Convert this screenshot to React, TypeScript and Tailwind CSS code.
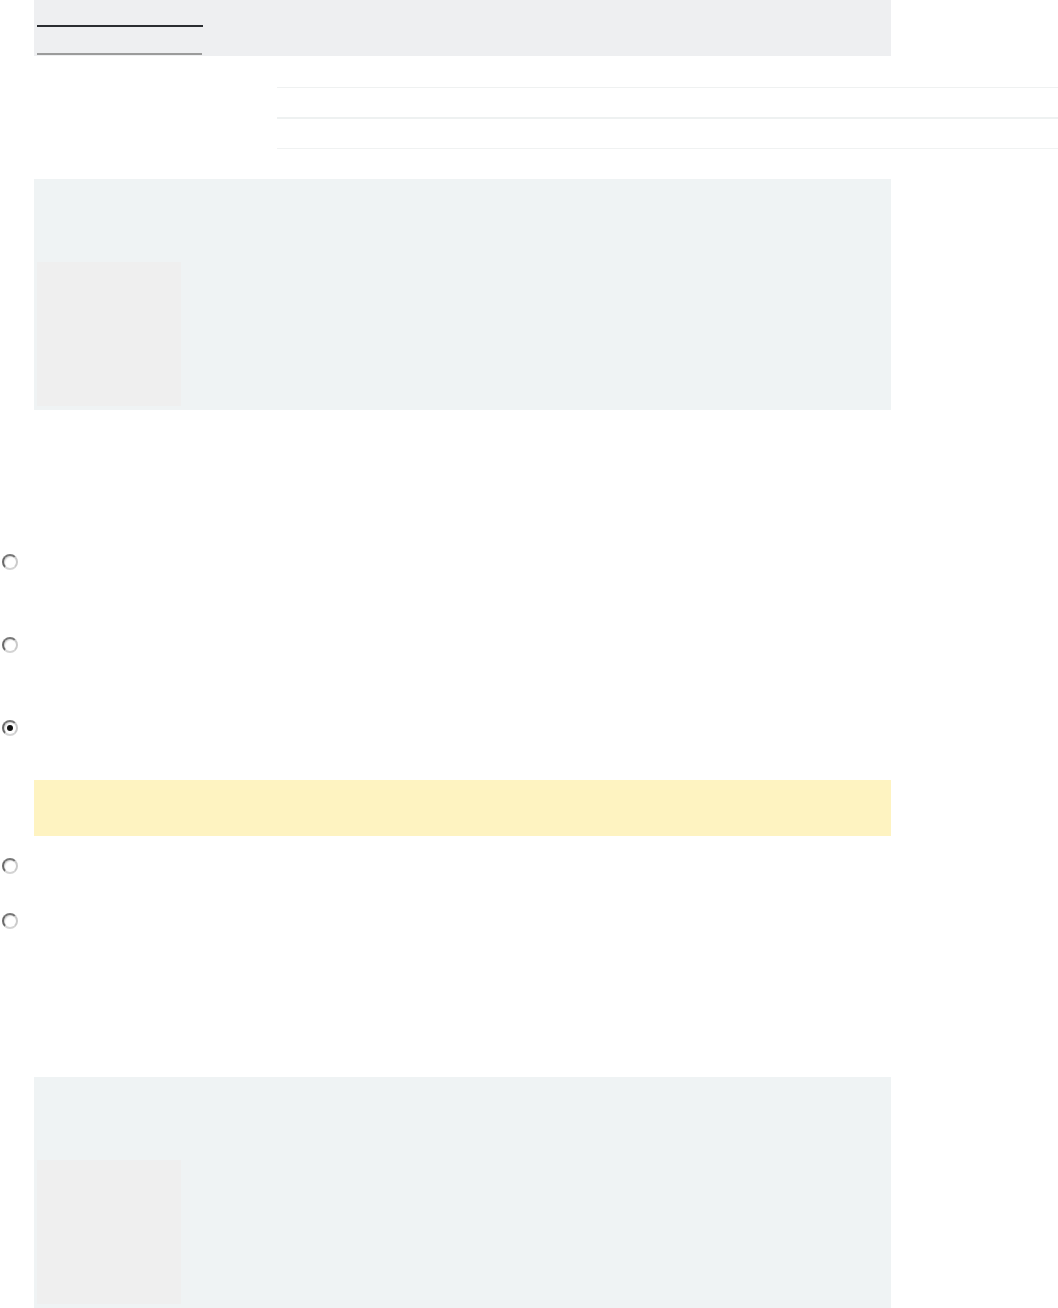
import React from 'react';

function Radio({ checked = false }: { checked?: boolean }) {
  return (
    <span className="flex h-[16px] w-[16px] items-center justify-center rounded-full border-2 border-t-[#777] border-l-[#6a6a6a] border-r-[#cacaca] border-b-[#d4d4d4] bg-white shadow-[inset_1px_1px_1px_rgba(0,0,0,0.15)]">
      {checked && <span className="h-[6px] w-[6px] rounded-full bg-[#111]" />}
    </span>
  );
}

function MediaBox() {
  return (
    <div className="ml-[34px] flex h-[231px] w-[857px] flex-col justify-end bg-[#eff3f4] pb-[4px] pl-[3px]">
      <div className="h-[144px] w-[144px] bg-[#efefef]" />
    </div>
  );
}

export default function App() {
  return (
    <div className="min-h-[1308px] w-[1058px] overflow-hidden bg-white" style={{ fontFamily: '"Liberation Sans", Arial, sans-serif' }}>
      {/* header tabs */}
      <div className="ml-[34px] h-[56px] w-[857px] bg-[#eeeff1] pl-[3px] pt-[25px]">
        <div className="h-[2px] w-[166px] bg-[#2a2d31]" />
        <div className="mt-[26px] h-[2px] w-[165px] bg-[#9b9b9b]" />
      </div>

      {/* divider rows */}
      <div className="ml-[277px] pt-[31px]">
        <div className="h-px bg-[#eff1f1]" />
        <div className="mt-[29px] h-[2px] bg-[#eef1f1]" />
        <div className="mt-[29px] h-px bg-[#f0f2f2]" />
      </div>

      <div className="mt-[30px]">
        <MediaBox />
      </div>

      {/* options */}
      <div className="ml-[2px] mt-[144px] flex flex-col">
        <Radio />
        <div className="mt-[67px]">
          <Radio />
        </div>
        <div className="mt-[67px]">
          <Radio checked />
        </div>
      </div>

      <div className="ml-[34px] mt-[44px] h-[56px] w-[857px] bg-[#fef3c1]" />

      <div className="ml-[2px] mt-[22px] flex flex-col">
        <Radio />
        <div className="mt-[39px]">
          <Radio />
        </div>
      </div>

      <div className="mt-[148px]">
        <MediaBox />
      </div>
    </div>
  );
}
